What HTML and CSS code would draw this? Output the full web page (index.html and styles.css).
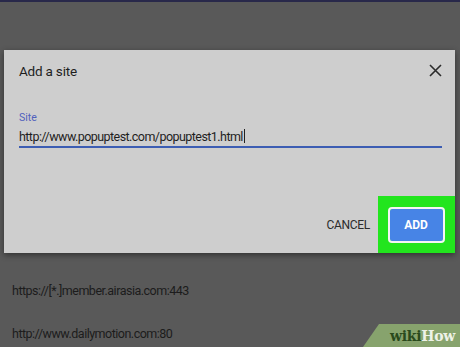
FILE: index.html
```html
<!DOCTYPE html>
<html lang="en">
<head>
  <meta charset="UTF-8">
  <title>Add a site</title>
  <link rel="stylesheet" href="styles.css">
</head>
<body>
  <div class="topbar"></div>

  <div class="site-list">
    <div class="site-row">https://[*.]member.airasia.com:443</div>
    <div class="site-row">http://www.dailymotion.com:80</div>
  </div>

  <div class="dialog">
    <div class="dialog-head">
      <h2>Add a site</h2>
      <svg class="close" width="13" height="13" viewBox="0 0 13 13">
        <path d="M1 1 L12 12 M12 1 L1 12" stroke="#2b2b2b" stroke-width="1.6" fill="none"/>
      </svg>
    </div>

    <label class="field-label">Site</label>
    <div class="field">http://www.popuptest.com/popuptest1.html<span class="caret"></span></div>

    <div class="actions">
      <span class="cancel">CANCEL</span>
      <div class="highlight">
        <button class="add">ADD</button>
      </div>
    </div>
  </div>

  <div class="wikihow"><span class="wiki">wiki</span><span class="how">How</span></div>
</body>
</html>
```

FILE: styles.css
```css
body {
  margin: 0;
  background: #595959;
  font-family: Roboto, "Liberation Sans", sans-serif;
  width: 460px;
  height: 347px;
  overflow: hidden;
  position: relative;
}

.topbar {
  height: 2px;
  background: #28284a;
}

.site-list {
  padding-top: 278px;
  display: flex;
  flex-direction: column;
  gap: 22px;
}

.site-row {
  line-height: 21px;
  padding-left: 12px;
  font-size: 12.5px;
  letter-spacing: -0.5px;
  color: #1c1c1c;
}

.dialog {
  position: absolute;
  left: 4px;
  top: 50px;
  width: 451px;
  height: 203px;
  background: #cecece;
  box-shadow: 0 2px 6px rgba(0,0,0,0.45);
  box-sizing: border-box;
  padding: 0 13px 0 15px;
}

.dialog-head {
  display: flex;
  justify-content: space-between;
  align-items: center;
  height: 42px;
}

.dialog-head h2 {
  margin: 0;
  font-size: 13.5px;
  font-weight: normal;
  letter-spacing: -0.2px;
  color: #1e1e1e;
}

.close {
  margin-top: -1px;
}

.field-label {
  display: block;
  margin-top: 19px;
  font-size: 10.5px;
  color: #5061bd;
}

.field {
  margin-top: 4px;
  padding-bottom: 1px;
  font-size: 12.5px;
  letter-spacing: -0.55px;
  line-height: 17px;
  color: #1e1e1e;
  border-bottom: 2px solid #3c5db3;
  width: 423px;
}

.caret {
  display: inline-block;
  width: 1px;
  height: 14px;
  margin-left: 1px;
  background: #222;
  vertical-align: -2px;
}

.actions {
  display: flex;
  justify-content: flex-end;
  align-items: center;
  margin-top: 48px;
  margin-right: -13px;
}

.cancel {
  font-size: 12px;
  letter-spacing: -0.3px;
  color: #2b2b2b;
  margin-right: 8px;
}

.highlight {
  background: #22e51e;
  width: 77px;
  height: 57px;
  display: flex;
  align-items: center;
  justify-content: center;
}

.add {
  width: 53px;
  height: 32px;
  background: #4784e6;
  border: none;
  border-radius: 2px;
  outline: 2px solid #f4f4f4;
  outline-offset: 0;
  color: #fff;
  font-family: Roboto, "Liberation Sans", sans-serif;
  font-size: 12px;
  font-weight: bold;
  margin-right: 1px;
}

.wikihow {
  position: absolute;
  right: 0;
  bottom: 0;
  width: 97px;
  height: 23px;
  background: #87a36d;
  clip-path: polygon(16px 0, 100% 0, 100% 100%, 0 100%);
  font-family: "DejaVu Serif", "Liberation Serif", serif;
  font-weight: bold;
  font-size: 14px;
  letter-spacing: -0.3px;
  line-height: 24px;
  text-align: right;
  padding-right: 5px;
  box-sizing: border-box;
}

.wiki {
  color: #2a4a1c;
}

.how {
  color: #eef2e8;
}
```
